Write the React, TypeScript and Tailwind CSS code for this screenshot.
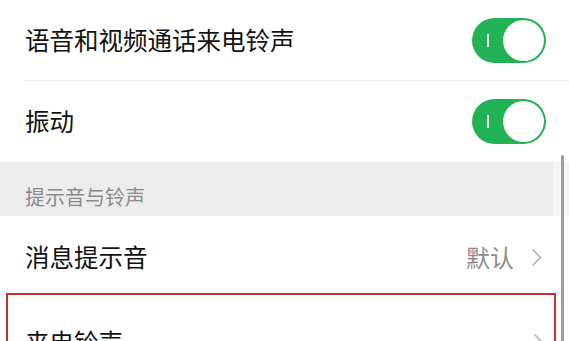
import React from "react";

function Toggle() {
  return (
    <div className="relative w-[74px] h-[45px] rounded-full bg-[#22b357] flex items-center">
      <div className="ml-[15px] w-[1.5px] h-[13px] bg-white/90" />
      <div className="absolute right-[2px] top-[2px] w-[41px] h-[41px] rounded-full bg-white" />
    </div>
  );
}

function Chevron() {
  return (
    <svg width="11" height="19" viewBox="0 0 11 19" className="shrink-0">
      <polyline points="1.5,1.5 9.5,9.5 1.5,17.5" fill="none" stroke="#b4b4b4" strokeWidth="1.6" />
    </svg>
  );
}

export default function App() {
  return (
    <div
      className="relative w-[569px] h-[341px] overflow-hidden bg-white text-[#111]"
      style={{ fontFamily: '"Noto Sans CJK SC", "Noto Sans", sans-serif' }}
    >
      <div className="flex items-center justify-between h-[80px] pl-[25px] pr-[23px]">
        <span className="text-[24.5px] leading-none">语音和视频通话来电铃声</span>
        <Toggle />
      </div>
      <div className="ml-[23px] h-px bg-[#efefef]" />
      <div className="flex items-center justify-between h-[81px] pl-[25px] pr-[23px]">
        <span className="text-[24.5px] leading-none">振动</span>
        <Toggle />
      </div>
      <div className="flex h-[54px]">
        <div className="flex-1 bg-[#ececec] pl-[25px] flex items-center pt-[16px]">
          <span className="text-[20px] leading-none text-[#8a8a8a]">提示音与铃声</span>
        </div>
        <div className="w-[16px] bg-[#f5f5f5]" />
      </div>
      <div className="flex items-center justify-between h-[77px] pt-[5px] pl-[25px] pr-[27px]">
        <span className="text-[24.5px] leading-none">消息提示音</span>
        <div className="flex items-center gap-[17px]">
          <span className="text-[24px] leading-none text-[#8c8c8c]">默认</span>
          <Chevron />
        </div>
      </div>
      <div className="ml-[6px] w-[550px] h-[98px] border-2 border-[#c8302e] flex items-center justify-between pl-[17px] pr-[10px]">
        <span className="text-[24.5px] leading-none">来电铃声</span>
        <Chevron />
      </div>
      <div className="absolute left-[561px] top-[155px] w-[3px] h-[200px] rounded-full bg-[#9c9c9c]" />
    </div>
  );
}
